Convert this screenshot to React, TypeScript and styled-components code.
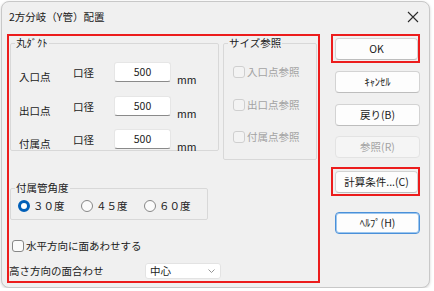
import styled, { createGlobalStyle } from "styled-components";

const GlobalStyle = createGlobalStyle`
  html, body {
    margin: 0;
    padding: 0;
    background: #ffffff;
  }
  body {
    font-family: "Noto Sans CJK JP", "Noto Sans", sans-serif;
    font-size: 10.5px;
    color: #1b1b1b;
  }
`;

const Window = styled.div`
  margin: 1px 0 0 1px;
  width: 429px;
  height: 287px;
  box-sizing: border-box;
  border: 1px solid #c8c8c8;
  border-radius: 8px;
  background: #f0f0f0;
  box-shadow: 0 1px 3px rgba(0, 0, 0, 0.18);
  display: flex;
  flex-direction: column;
  overflow: hidden;
`;

const TitleBar = styled.div`
  height: 32px;
  flex-shrink: 0;
  display: flex;
  align-items: center;
  justify-content: space-between;
  padding: 0 10px 3px 7px;
  box-sizing: border-box;
  line-height: 14px;
`;

const CloseIcon = styled.svg`
  width: 12px;
  height: 12px;
`;

const Body = styled.div`
  display: flex;
  align-items: flex-start;
  padding-left: 5px;
`;

// red annotation frame
const LeftPanel = styled.div`
  width: 313px;
  height: 249px;
  box-sizing: border-box;
  border: 2px solid #ec1c1c;
  display: flex;
  flex-direction: column;
`;

const TopRow = styled.div`
  display: flex;
  align-items: flex-start;
  gap: 4px;
  padding-left: 1px;
`;

const Group = styled.fieldset<{ $w: number; $h: number }>`
  margin: 0;
  padding: 0;
  min-inline-size: 0;
  border: 1px solid #d8d8d8;
  border-radius: 2px;
  width: ${(p) => p.$w}px;
  height: ${(p) => p.$h}px;
  box-sizing: border-box;
`;

const Legend = styled.legend`
  margin-left: 4px;
  padding: 0 1px;
  line-height: 14px;
`;

const DuctRows = styled.div`
  display: flex;
  flex-direction: column;
  gap: 13.5px;
  padding: 12px 0 0 8px;
`;

const DuctRow = styled.div`
  display: flex;
  align-items: flex-start;
  height: 20px;
`;

const Text = styled.span<{ $w?: number; $top?: number; $left?: number }>`
  display: block;
  line-height: 14px;
  white-space: nowrap;
  width: ${(p) => (p.$w ? `${p.$w}px` : "auto")};
  margin-top: ${(p) => p.$top ?? 0}px;
  margin-left: ${(p) => p.$left ?? 0}px;
`;

const NumInput = styled.div`
  width: 57px;
  height: 20px;
  box-sizing: border-box;
  background: #ffffff;
  border: 1px solid #e6e6e6;
  border-bottom: 1px solid #8a8a8a;
  border-radius: 3px;
  text-align: center;
  line-height: 17px;
  color: #1b1b1b;
`;

const RefRows = styled.div`
  display: flex;
  flex-direction: column;
  gap: 18.5px;
  padding: 15px 0 0 9px;
`;

const CheckRow = styled.label<{ $disabled?: boolean }>`
  display: flex;
  align-items: center;
  gap: 2px;
  height: 14px;
  line-height: 14px;
  white-space: nowrap;
  color: ${(p) => (p.$disabled ? "#a3a3a3" : "#1b1b1b")};
`;

const CheckBox = styled.span<{ $disabled?: boolean }>`
  width: 12px;
  height: 12px;
  box-sizing: border-box;
  border-radius: 3px;
  border: 1px solid ${(p) => (p.$disabled ? "#cfcfcf" : "#878787")};
  background: ${(p) => (p.$disabled ? "#f3f3f3" : "#fbfbfb")};
  flex-shrink: 0;
`;

const AngleGroupWrap = styled.div`
  margin: 21px 0 0 1px;
`;

const RadioRow = styled.div`
  display: flex;
  padding: 4px 0 0 7px;
`;

const RadioItem = styled.label`
  display: flex;
  align-items: center;
  gap: 3px;
  width: 64px;
  height: 14px;
  line-height: 14px;
  white-space: nowrap;
`;

const RadioDot = styled.span<{ $on?: boolean }>`
  width: 12px;
  height: 12px;
  box-sizing: border-box;
  border-radius: 50%;
  flex-shrink: 0;
  background: ${(p) => (p.$on ? "#ffffff" : "#fbfbfb")};
  border: ${(p) => (p.$on ? "3.5px solid #005fb8" : "1px solid #878787")};
`;

const FlatCheck = styled.div`
  margin: 19px 0 0 3px;
`;

const SelectRow = styled.div`
  display: flex;
  align-items: center;
  margin-top: 10px;
  height: 16px;
`;

const SelectBox = styled.div`
  width: 76px;
  height: 16px;
  box-sizing: border-box;
  background: #ffffff;
  border: 1px solid #e3e3e3;
  border-radius: 3px;
  display: flex;
  align-items: center;
  justify-content: space-between;
  padding: 0 5px 0 4px;
  line-height: 14px;
`;

const Chevron = styled.svg`
  width: 7px;
  height: 4px;
`;

const RightColumn = styled.div`
  display: flex;
  flex-direction: column;
  align-items: flex-start;
  margin-left: 11px;
`;

const Marked = styled.div<{ $top?: number }>`
  border: 2px solid #ec1c1c;
  padding: 1.5px 0 1.5px 2px;
  margin-top: ${(p) => p.$top ?? 0}px;
  display: flex;
`;

const Button = styled.button<{ $w?: number; $top?: number; $focus?: boolean }>`
  width: ${(p) => p.$w ?? 85}px;
  height: 22px;
  margin: ${(p) => p.$top ?? 0}px 0 0 ${(p) => (p.$top !== undefined ? 4 : 0)}px;
  box-sizing: border-box;
  padding: 0;
  font-family: inherit;
  font-size: 10.5px;
  line-height: 14px;
  color: #1b1b1b;
  background: #fdfdfd;
  border: 1px solid #d3d3d3;
  border-bottom-color: #bdbdbd;
  border-radius: 4px;
  ${(p) =>
    p.$focus &&
    `
    border: 1px solid #4a90d9;
    box-shadow: inset 0 0 0 1px #9cc6ee;
  `}
  &:disabled {
    color: #a3a3a3;
    background: #f5f5f5;
    border-color: #e3e3e3;
  }
`;

export default function App() {
  const duct = ["入口点", "出口点", "付属点"];
  const refs = ["入口点参照", "出口点参照", "付属点参照"];
  const angles = ["３０度", "４５度", "６０度"];

  return (
    <>
      <GlobalStyle />
      <Window>
        <TitleBar>
          <span>2方分岐（Y管）配置</span>
          <CloseIcon viewBox="0 0 12 12">
            <path d="M1 1 L11 11 M11 1 L1 11" stroke="#2b2b2b" strokeWidth="1.1" fill="none" />
          </CloseIcon>
        </TitleBar>
        <Body>
          <LeftPanel>
            <TopRow>
              <Group $w={209} $h={115}>
                <Legend>丸ﾀﾞｸﾄ</Legend>
                <DuctRows>
                  {duct.map((d) => (
                    <DuctRow key={d}>
                      <Text $w={54} $top={8}>{d}</Text>
                      <Text $w={41} $top={4}>口径</Text>
                      <NumInput>500</NumInput>
                      <Text $top={11} $left={6}>mm</Text>
                    </DuctRow>
                  ))}
                </DuctRows>
              </Group>
              <Group $w={94} $h={124}>
                <Legend>サイズ参照</Legend>
                <RefRows>
                  {refs.map((r) => (
                    <CheckRow key={r} $disabled>
                      <CheckBox $disabled />
                      {r}
                    </CheckRow>
                  ))}
                </RefRows>
              </Group>
            </TopRow>
            <AngleGroupWrap>
              <Group $w={198} $h={39}>
                <Legend>付属管角度</Legend>
                <RadioRow>
                  {angles.map((a, i) => (
                    <RadioItem key={a}>
                      <RadioDot $on={i === 0} />
                      {a}
                    </RadioItem>
                  ))}
                </RadioRow>
              </Group>
            </AngleGroupWrap>
            <FlatCheck>
              <CheckRow>
                <CheckBox />
                水平方向に面あわせする
              </CheckRow>
            </FlatCheck>
            <SelectRow>
              <Text $w={136}>高さ方向の面合わせ</Text>
              <SelectBox>
                <span>中心</span>
                <Chevron viewBox="0 0 7 4">
                  <path d="M0.5 0.5 L3.5 3.5 L6.5 0.5" stroke="#8a8a8a" strokeWidth="0.9" fill="none" />
                </Chevron>
              </SelectBox>
            </SelectRow>
          </LeftPanel>
          <RightColumn>
            <Marked>
              <Button $w={83}>OK</Button>
            </Marked>
            <Button $top={8}>ｷｬﾝｾﾙ</Button>
            <Button $top={11}>戻り(B)</Button>
            <Button $top={10} disabled>
              参照(R)
            </Button>
            <Marked $top={9}>
              <Button $w={83}>計算条件...(C)</Button>
            </Marked>
            <Button $top={16} $focus>
              ﾍﾙﾌﾟ(H)
            </Button>
          </RightColumn>
        </Body>
      </Window>
    </>
  );
}
